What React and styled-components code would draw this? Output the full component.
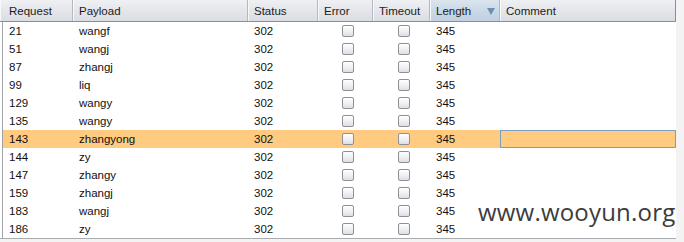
import React from "react";
import styled, { createGlobalStyle } from "styled-components";

const Global = createGlobalStyle`
  html, body { margin: 0; padding: 0; background: #f3f3f3; }
  body { width: 684px; height: 242px; overflow: hidden; font-family: "Liberation Sans", Arial, sans-serif; }
`;

const Page = styled.div`
  position: relative;
  width: 684px;
  height: 242px;
  display: flex;
  flex-direction: column;
  background: #f3f3f3;
`;

const Pane = styled.div`
  width: 676px;
  display: flex;
  flex-direction: column;
  background: #fff;
  border-bottom: 1px solid #a9abaf;
`;

const cols = [73, 175, 70, 55, 57, 70, 176];
const bodyCols = [70, 175, 70, 55, 57, 70, 176];

const HeaderRow = styled.div`
  display: grid;
  grid-template-columns: ${cols.map((c) => c + "px").join(" ")};
  height: 21px;
  border-bottom: 1px solid #8b8e95;
`;

const HeadCell = styled.div`
  position: relative;
  display: flex;
  align-items: center;
  padding-left: ${(p) => (p.$first ? 9 : 6)}px;
  font-size: 11.5px;
  color: #1c1c1c;
  border-right: 1px solid ${(p) => (p.$last ? "#8b8e95" : "#b4b8bf")};
  box-shadow: inset 1px 0 0 #f7f8fa;
  background: ${(p) =>
    p.$active
      ? "linear-gradient(to bottom, #dbe5f0 0%, #c9d7e6 55%, #c2d1e2 100%)"
      : "linear-gradient(to bottom, #eef0f3 0%, #e3e5ea 55%, #dadde3 100%)"};
`;

const SortArrow = styled.span`
  position: absolute;
  right: 4px;
  top: 8px;
  width: 0;
  height: 0;
  border-left: 4px solid transparent;
  border-right: 4px solid transparent;
  border-top: 7px solid #6e8fb2;
`;

const Body = styled.div`
  margin-left: 2px;
  border-left: 1px solid #a0a3a8;
  display: flex;
  flex-direction: column;
`;

const Row = styled.div`
  display: grid;
  grid-template-columns: ${bodyCols.map((c) => c + "px").join(" ")};
  height: 18px;
  background: ${(p) => (p.$selected ? "#fecb81" : "transparent")};
`;

const Cell = styled.div`
  display: flex;
  align-items: center;
  justify-content: ${(p) => (p.$center ? "center" : "flex-start")};
  padding-left: ${(p) => (p.$center ? 0 : p.$pad)}px;
  font-size: 11.5px;
  color: #111;
  white-space: nowrap;
  box-sizing: border-box;
  border: ${(p) => (p.$focus ? "1px solid #7b9dc4" : "none")};
`;

const Check = styled.span`
  display: inline-block;
  width: 10px;
  height: 10px;
  border: 1px solid #8d9096;
  border-radius: 2px;
  background: linear-gradient(to bottom, #ffffff 0%, #eceef1 60%, #dcdfe4 100%);
  margin-left: ${(p) => p.$shift || 0}px;
`;

const Watermark = styled.div`
  position: absolute;
  left: 478px;
  top: 195px;
  font-family: "Open Sans", "DejaVu Sans", sans-serif;
  font-size: 24px;
  color: #3c3c3c;
  letter-spacing: 0.2px;
`;

const rows = [
  ["21", "wangf"],
  ["51", "wangj"],
  ["87", "zhangj"],
  ["99", "liq"],
  ["129", "wangy"],
  ["135", "wangy"],
  ["143", "zhangyong"],
  ["144", "zy"],
  ["147", "zhangy"],
  ["159", "zhangj"],
  ["183", "wangj"],
  ["186", "zy"],
];

const headers = ["Request", "Payload", "Status", "Error", "Timeout", "Length", "Comment"];

export default function App() {
  return (
    <Page>
      <Global />
      <Pane>
        <HeaderRow>
          {headers.map((h, i) => (
            <HeadCell key={h} $first={i === 0} $active={h === "Length"} $last={i === headers.length - 1}>
              {h}
              {h === "Length" && <SortArrow />}
            </HeadCell>
          ))}
        </HeaderRow>
        <Body>
          {rows.map(([req, pay]) => {
            const sel = req === "143";
            return (
              <Row key={req} $selected={sel}>
                <Cell $pad={6}>{req}</Cell>
                <Cell $pad={6}>{pay}</Cell>
                <Cell $pad={6}>302</Cell>
                <Cell $center><Check $shift={4} /></Cell>
                <Cell $center><Check $shift={4} /></Cell>
                <Cell $pad={6}>345</Cell>
                <Cell $pad={6} $focus={sel} />
              </Row>
            );
          })}
        </Body>
      </Pane>
      <Watermark>www.wooyun.org</Watermark>
    </Page>
  );
}
